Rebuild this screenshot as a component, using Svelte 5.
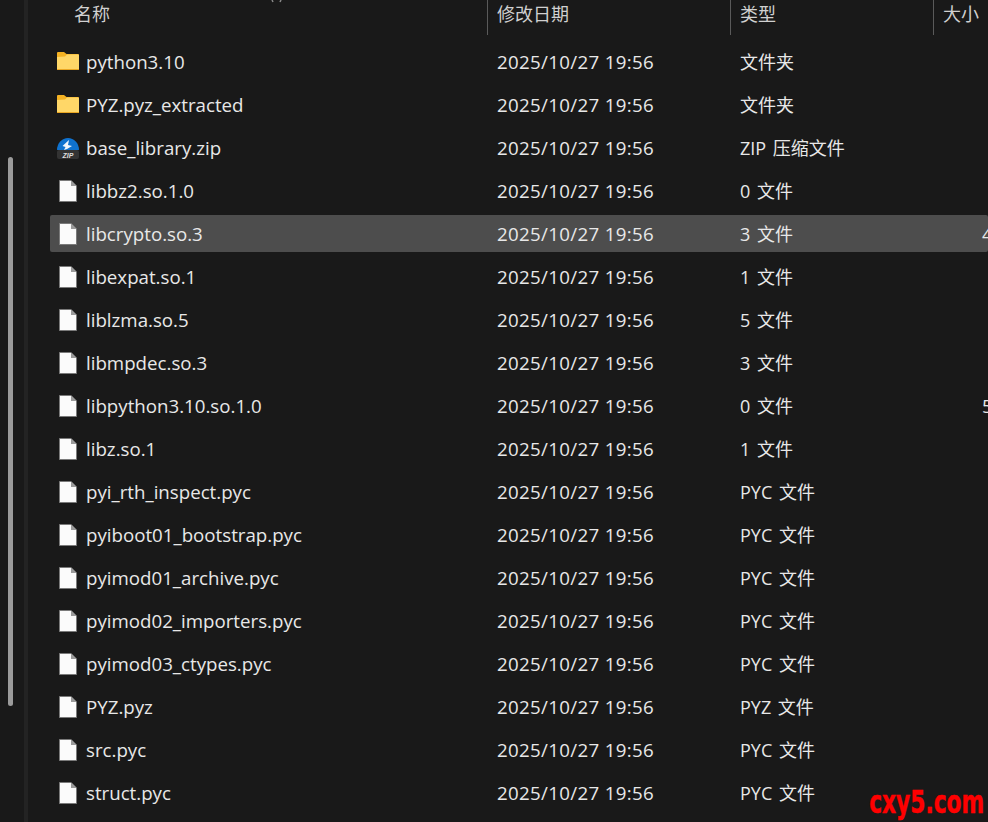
<script lang="ts">
  type Row = { name: string; icon: string; type: string; size?: string };

  const date = "2025/10/27 19:56";

  const rows: Row[] = [
    { name: "python3.10", icon: "folder", type: "文件夹" },
    { name: "PYZ.pyz_extracted", icon: "folder", type: "文件夹" },
    { name: "base_library.zip", icon: "zip", type: "ZIP 压缩文件" },
    { name: "libbz2.so.1.0", icon: "file", type: "0 文件" },
    { name: "libcrypto.so.3", icon: "file", type: "3 文件", size: "4" },
    { name: "libexpat.so.1", icon: "file", type: "1 文件" },
    { name: "liblzma.so.5", icon: "file", type: "5 文件" },
    { name: "libmpdec.so.3", icon: "file", type: "3 文件" },
    { name: "libpython3.10.so.1.0", icon: "file", type: "0 文件", size: "5" },
    { name: "libz.so.1", icon: "file", type: "1 文件" },
    { name: "pyi_rth_inspect.pyc", icon: "file", type: "PYC 文件" },
    { name: "pyiboot01_bootstrap.pyc", icon: "file", type: "PYC 文件" },
    { name: "pyimod01_archive.pyc", icon: "file", type: "PYC 文件" },
    { name: "pyimod02_importers.pyc", icon: "file", type: "PYC 文件" },
    { name: "pyimod03_ctypes.pyc", icon: "file", type: "PYC 文件" },
    { name: "PYZ.pyz", icon: "file", type: "PYZ 文件" },
    { name: "src.pyc", icon: "file", type: "PYC 文件" },
    { name: "struct.pyc", icon: "file", type: "PYC 文件" },
  ];
</script>

<div class="window">
  <aside class="rail">
    <div class="thumb"></div>
  </aside>
  <main class="list">
    <header class="head">
      <div class="h name">名称</div>
      <div class="h date">修改日期</div>
      <div class="h type">类型</div>
      <div class="h size">大小</div>
      <svg class="sort" viewBox="0 0 12 3">
        <path d="M1 0l1 2M10 0l-1 2" stroke="#8a8a8a" stroke-width="1.500" fill="none" />
      </svg>
    </header>
    {#each rows as r}
      <div class="row" class:selected={r.name === "libcrypto.so.3"}>
        <div class="cell name">
          {#if r.icon === "folder"}
            <svg class="icon" viewBox="0 0 24 24">
              <path d="M1 3q0-1 1-1h6l2.500 2H22q1 0 1 1V19q0 1-1 1H2q-1 0-1-1z" fill="#f5b223" />
              <path d="M1 7l8-.5 2-2h11q1 0 1 1V19q0 1-1 1H2q-1 0-1-1z" fill="#ffd768" />
              <rect x="1" y="19" width="22" height="1" fill="#eaa723" />
            </svg>
          {:else if r.icon === "zip"}
            <svg class="icon" viewBox="0 0 24 24">
              <path d="M1 14a11 12 0 0 1 22 0z" fill="#0f72cf" />
              <path d="M13 4l-1 5 4 1-5 3-3 1 1.500-3-3-1z" fill="#f2f6fb" />
              <rect x="1" y="14" width="22" height="9" rx="2" fill="#333333" />
              <text x="12" y="22" class="ziptext" text-anchor="middle">ZIP</text>
            </svg>
          {:else}
            <svg class="icon" viewBox="0 0 24 24">
              <path d="M3.500 1.500h11.500l5.500 5.500v15.500h-17z" fill="#fbfbfb" stroke="#7a7a7a" stroke-width="1" />
              <path d="M15 1.500v5.500h5.500z" fill="#9a9a9a" />
            </svg>
          {/if}
          <span>{r.name}</span>
        </div>
        <div class="cell date">{date}</div>
        <div class="cell type">{r.type}</div>
        <div class="cell size">{r.size ?? ""}</div>
      </div>
    {/each}
  </main>
  <div class="mark">cxy5.com</div>
</div>

<style>
  :global(body) {
    margin: 0;
    background: #191919;
  }

  .window {
    position: relative;
    display: flex;
    width: 988px;
    height: 822px;
    overflow: hidden;
    background: #191919;
    color: #e8e8e8;
    font-family: "Open Sans", "Noto Sans CJK SC", sans-serif;
    font-size: 18.7px;
  }

  .rail {
    width: 28px;
    flex: none;
    box-sizing: border-box;
    padding: 157px 0 0 8px;
    border-right: 4px solid #232323;
  }

  .thumb {
    width: 5px;
    height: 549px;
    border-radius: 3px;
    background: #9b9b9b;
  }

  .list {
    flex: 1;
    min-width: 0;
    padding-left: 22px;
  }

  .head,
  .row {
    display: grid;
    grid-template-columns: 437px 243px 203px 200px;
    align-items: center;
  }

  .head {
    position: relative;
    height: 34px;
    margin-bottom: 9px;
    font-size: 18px;
  }

  .sort {
    position: absolute;
    left: 221px;
    top: 0;
    width: 12px;
    height: 3px;
  }

  .h {
    height: 100%;
    display: flex;
    align-items: center;
    box-sizing: border-box;
    padding-left: 9px;
    color: #d0d0d0;
    padding-bottom: 9px;
  }

  .h.name {
    padding-left: 24px;
  }

  .h.date,
  .h.type,
  .h.size {
    border-left: 1px solid #5a5a5a;
  }

  .row {
    height: 37px;
    margin-bottom: 6px;
    border-radius: 2px;
  }

  .row.selected {
    background: #4d4d4d;
  }

  .cell {
    white-space: nowrap;
    overflow: visible;
  }

  .cell.name {
    display: flex;
    align-items: center;
    gap: 6px;
    padding-left: 6px;
  }

  .cell.date {
    padding-left: 10px;
    letter-spacing: 0.33px;
  }

  .cell.type {
    padding-left: 10px;
    padding-bottom: 2px;
    font-size: 18px;
    word-spacing: 2px;
  }

  .cell.size {
    padding-left: 49px;
  }

  .icon {
    width: 24px;
    height: 24px;
    flex: none;
  }

  .ziptext {
    font-size: 7px;
    font-weight: 700;
    font-style: italic;
    fill: #dddddd;
    font-family: "Liberation Sans", sans-serif;
  }

  .mark {
    position: absolute;
    right: 4px;
    bottom: 1px;
    color: #ff0000;
    font-family: "DejaVu Sans", sans-serif;
    font-weight: 700;
    font-size: 32px;
    line-height: 38px;
    transform: scaleX(0.68);
    transform-origin: right center;
    -webkit-text-stroke: 0.5px #ff0000;
  }
</style>
